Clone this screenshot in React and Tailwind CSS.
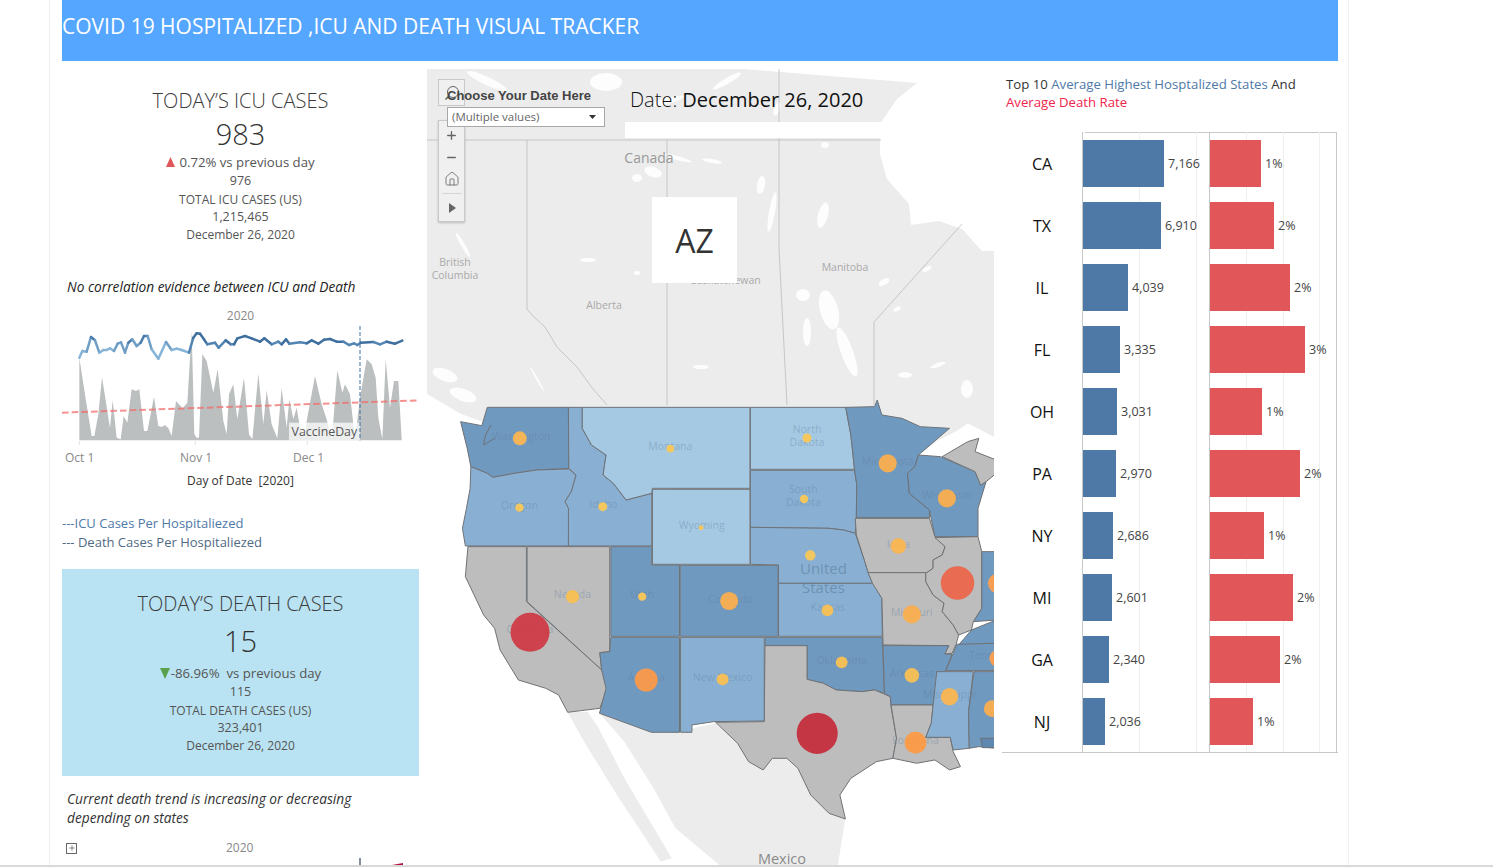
import { Plus, Minus, Home } from 'lucide-react';

const DARK = '#7099c0';
const MID = '#89b0d3';
const LIGHT = '#a5c9e3';
const GRAY = '#bdbdbd';
const LAND = '#ececec';

// state outlines, traced from a crop: x is 2.737x and y is 3x the page
const states = [
  [DARK, '165,37 387,37 388,220 300,225 240,235 180,247 165,235 120,215 110,160 92,80 150,92'],
  [MID, '120,215 165,235 180,247 240,235 300,225 388,222 408,240 395,290 378,320 388,340 387,453 105,453 97,400 108,340 118,280'],
  [MID, '387,37 425,37 425,100 450,150 490,180 482,240 510,265 545,315 580,305 615,295 615,453 387,453 387,340 378,320 395,290 408,240 388,220'],
  [LIGHT, '425,37 884,37 884,280 617,280 615,295 580,305 545,315 510,265 482,240 490,180 450,150 425,100'],
  [LIGHT, '885,37 1146,37 1160,120 1170,223 885,223'],
  [MID, '885,226 1170,226 1176,268 1175,368 1172,415 1140,405 1100,400 885,397'],
  [DARK, '1146,37 1225,35 1232,15 1245,60 1300,70 1350,95 1430,100 1345,180 1335,215 1315,235 1320,295 1375,345 1375,368 1175,368 1176,268 1170,223 1160,120'],
  [DARK, '1345,180 1405,185 1500,230 1515,270 1530,260 1508,340 1508,425 1390,425 1375,345 1320,295 1315,235 1335,215'],
  [GRAY, '1410,185 1480,140 1510,130 1500,170 1558,195 1558,235 1530,260 1515,270 1500,230'],
  [GRAY, '1172,370 1375,370 1390,425 1418,455 1410,480 1385,495 1385,520 1365,535 1207,533 1195,490 1175,420'],
  [MID, '885,397 1100,400 1140,405 1172,415 1195,490 1207,533 1220,565 962,565 962,510 885,508'],
  [MID, '962,565 1220,565 1245,610 1246,724 962,724'],
  [GRAY, '1207,533 1365,533 1365,560 1385,600 1415,625 1410,650 1440,690 1455,720 1448,748 1437,775 1417,777 1428,752 1248,750 1245,610 1220,567'],
  [DARK, '1518,470 1558,470 1558,675 1495,680 1518,640'],
  [DARK, '1455,750 1490,705 1558,675 1558,745'],
  [GRAY, '1390,428 1508,425 1518,470 1518,640 1495,680 1490,705 1455,720 1440,690 1410,650 1415,625 1385,600 1365,560 1365,535 1385,520 1385,495 1410,480 1418,455'],
  [DARK, '925,727 1246,727 1252,895 1225,885 1190,890 1120,885 1085,865 1040,853 1040,752 925,752'],
  [GRAY, '925,752 1040,752 1040,853 1085,865 1120,885 1190,890 1225,885 1268,905 1270,935 1285,1030 1275,1090 1230,1100 1160,1150 1130,1200 1145,1272 1100,1255 1050,1200 1015,1120 985,1090 945,1090 920,1125 880,1100 850,1045 790,982 923,980'],
  [DARK, '1248,752 1428,752 1417,777 1437,778 1420,825 1395,860 1385,930 1270,930 1268,905 1252,895'],
  [GRAY, '1270,930 1385,930 1380,985 1365,1027 1432,1027 1440,1070 1460,1115 1430,1125 1390,1095 1340,1105 1275,1090 1285,1030'],
  [MID, '1395,830 1495,830 1482,950 1484,1060 1440,1065 1432,1027 1365,1027 1380,985 1385,930'],
  [DARK, '1497,830 1558,830 1558,1060 1510,1055 1484,1060 1482,950'],
  ['#5e88b0', '1515,1030 1558,1030 1558,1058 1520,1058'],
  [DARK, '1420,827 1440,775 1450,748 1558,745 1558,827'],
  [GRAY, '274,455 500,455 500,770 473,773 478,825 274,620'],
  [GRAY, '112,455 272,455 272,620 478,825 497,870 473,940 385,952 360,900 325,880 250,855 200,765 185,700 155,660 105,545'],
  [DARK, '503,455 615,455 615,510 691,510 691,724 503,724'],
  [DARK, '693,511 961,511 961,724 693,724'],
  [LIGHT, '617,283 884,283 884,508 617,508'],
  [DARK, '503,727 691,727 691,1012 614,1012 472,955 490,880 478,825 473,773 500,770'],
  [MID, '694,727 923,727 923,978 785,980 725,990 725,1012 694,1012'],
];

const stateLabels = [
  ['Washington', 258, 122], ['Montana', 666, 152], ['North', 1040, 102], ['Dakota', 1040, 140],
  ['Minnesota', 1261, 197], ['Wisconsin', 1423, 301], ['South', 1030, 283], ['Dakota', 1030, 320],
  ['Oregon', 253, 331], ['Idaho', 483, 327], ['Wyoming', 752, 389], ['Iowa', 1290, 446],
  ['Nevada', 398, 597], ['Utah', 589, 597], ['Colorado', 830, 611], ['Kansas', 1097, 637],
  ['Missouri', 1327, 650], ['Oklahoma', 1135, 794], ['Arkansas', 1327, 833],
  ['Arizona', 600, 846], ['New Mexico', 809, 845], ['Mississippi', 1430, 896],
  ['Louisiana', 1337, 1035], ['California', 282, 703],
];

const bubbles = [
  [254, 130, 20, '#f9b652'], [666, 161, 11, '#f8c85a'], [1040, 129, 13, '#f8c85a'], [1261, 205, 26, '#f9ae50'],
  [1423, 310, 26, '#f9ae50'], [1032, 312, 12, '#f8c85a'], [253, 338, 12, '#f8c85a'], [481, 335, 13, '#f8c85a'],
  [750, 398, 7, '#f8c85a'], [1049, 481, 15, '#f8c85a'], [1290, 453, 22, '#f9b652'], [1452, 564, 48, '#e9674d'],
  [1562, 565, 28, '#fa9f50'], [398, 605, 19, '#f8c054'], [589, 605, 12, '#f8c85a'], [827, 618, 26, '#f9ae50'],
  [1096, 646, 17, '#f8c054'], [1327, 658, 26, '#f9ae50'], [282, 712, 56, '#cd3c47'], [1327, 841, 21, '#f8c054'],
  [1135, 802, 17, '#f8c054'], [600, 855, 33, '#fa9a4b'], [809, 853, 17, '#f8c054'], [1430, 905, 25, '#f9b652'],
  [1068, 1015, 59, '#c53040'], [1337, 1043, 31, '#fb9b47'], [1562, 790, 24, '#fa9f50'], [1547, 941, 24, '#f9ae50'],
];

// white lakes over canada, as cx, cy, rx, ry, rotation in map pixels
const lakes = [
  [226, 103, 9, 5, 20], [210, 109, 5, 4, 0], [334, 116, 4, 9, 10], [345, 143, 3, 20, 10], [396, 146, 5, 13, 15],
  [402, 241, 9, 20, -15], [420, 283, 6, 26, -20], [380, 263, 4, 14, 0], [376, 226, 7, 6, 0], [274, 298, 8, 2, 0],
  [161, 191, 8, 2, 0], [210, 204, 3, 2, 0], [179, 13, 16, 9, 0], [240, 32, 18, 3, -15], [250, 89, 15, 2, 15],
  [285, 92, 10, 2, 10], [540, 320, 6, 9, 0], [478, 306, 7, 3, 0], [457, 213, 6, 3, -30], [511, 296, 8, 2, -20],
  [36, 176, 2, 14, -30], [18, 306, 13, 6, 20], [36, 326, 14, 6, 20], [398, 76, 4, 3, 0], [60, 12, 22, 4, 25],
  [110, 310, 1, 14, -30], [300, 12, 16, 3, -30], [350, 40, 3, 7, 20], [470, 240, 4, 2, -30], [500, 200, 5, 2, -30],
];

const mapX = (z) => z / 2.737;
const mapY = (z) => 326 + z / 3;

const icuLine = [
  [88, 170], [97, 150], [110, 152], [123, 108], [135, 118], [148, 155], [160, 147], [170, 147], [180, 142], [192, 150], [203, 128], [213, 124],
  [225, 155], [235, 125], [247, 115], [260, 135], [272, 125], [282, 105], [293, 105], [305, 145], [325, 173], [348, 123], [365, 147], [380, 143],
  [395, 147], [417, 155], [430, 110], [440, 97], [450, 98], [462, 115], [472, 130], [495, 125], [506, 140], [527, 118], [542, 130], [552, 130],
  [562, 112], [585, 105], [605, 112], [630, 122], [643, 112], [665, 130], [685, 122], [695, 130], [708, 115], [718, 128], [750, 124], [770, 127],
  [785, 118], [805, 128], [822, 116], [840, 114], [860, 122], [880, 122], [897, 132], [912, 127], [922, 132], [932, 125], [970, 123], [990, 130],
  [1010, 122], [1035, 128], [1057, 119],
];

const deathArea = '88,418 88,170 108,300 125,405 133,405 145,340 156,228 175,350 180,380 188,298 200,410 212,415 221,345 232,365 245,265 258,270 268,265 282,390 292,390 312,288 325,375 335,378 345,372 355,382 365,405 378,300 398,322 412,305 425,90 433,400 440,410 447,410 457,160 470,180 490,275 503,205 520,360 530,400 537,280 550,250 562,355 582,230 597,400 607,415 625,218 640,370 650,268 665,370 682,412 695,262 710,380 718,295 730,355 740,320 750,380 765,410 770,360 795,225 815,310 830,355 845,415 850,360 862,208 877,275 885,250 900,280 915,415 930,290 950,175 965,190 977,230 985,350 997,415 1007,175 1020,320 1032,240 1045,240 1055,415 1055,418';

const lineColor = (x, y) => {
  if (y > 160) return '#a9cfe8';
  if (x < 430) return y > 140 ? '#86b4d8' : y > 120 ? '#6f9ec6' : '#4a7cac';
  return y > 125 ? '#5285b3' : '#3f6f9f';
};

const topStates = [
  { st: 'CA', hosp: '7,166', hw: 81, rate: '1%', rw: 51 },
  { st: 'TX', hosp: '6,910', hw: 78, rate: '2%', rw: 64 },
  { st: 'IL', hosp: '4,039', hw: 45, rate: '2%', rw: 80 },
  { st: 'FL', hosp: '3,335', hw: 37, rate: '3%', rw: 95 },
  { st: 'OH', hosp: '3,031', hw: 34, rate: '1%', rw: 52 },
  { st: 'PA', hosp: '2,970', hw: 33, rate: '2%', rw: 90 },
  { st: 'NY', hosp: '2,686', hw: 30, rate: '1%', rw: 54 },
  { st: 'MI', hosp: '2,601', hw: 29, rate: '2%', rw: 83 },
  { st: 'GA', hosp: '2,340', hw: 26, rate: '2%', rw: 70 },
  { st: 'NJ', hosp: '2,036', hw: 22, rate: '1%', rw: 43 },
];

function KpiLines({ title, value, valueClass, change, prev, totalLabel, total }) {
  return (
    <div className="flex flex-col items-center text-[12.5px] leading-[18px] text-[#555]">
      <div className="text-[20px] leading-[24px] font-light text-[#3c3c3c]">{title}</div>
      <div className={valueClass}>{value}</div>
      {change}
      <div className="mt-[1px]">{prev}</div>
      <div className="mt-[1px] text-[12px] leading-[17px]">{totalLabel}</div>
      <div>{total}</div>
      <div className="text-[12px]">December 26, 2020</div>
    </div>
  );
}

function TrendChart() {
  return (
    <svg className="block w-[357px] h-[120px]" viewBox="36 75 1071 360">
      <polygon points={deathArea} fill="#bcbfbf" />
      <path d="M88,420 V432 M436,420 V432 M772,420 V432" stroke="#e3e3e3" strokeWidth="3" />
      {icuLine.slice(1).map(([x, y], i) => {
        const [px, py] = icuLine[i];
        return <line key={i} x1={px} y1={py} x2={x} y2={y} stroke={lineColor(x, (y + py) / 2)} strokeWidth="7.5" strokeLinecap="round" />;
      })}
      <line x1="36" y1="335" x2="1107" y2="298" stroke="#f26d6d" strokeOpacity="0.75" strokeWidth="6" strokeDasharray="20 9" />
      <rect x="717" y="365" width="213" height="53" fill="#ffffff" fillOpacity="0.72" />
      <line x1="930" y1="75" x2="930" y2="418" stroke="#3f6f9f" strokeWidth="3" strokeDasharray="12 6" />
      <text x="823" y="405" textAnchor="middle" fontSize="37" fill="#555">VaccineDay</text>
    </svg>
  );
}

function UsMap() {
  return (
    <svg className="absolute inset-0 w-[567px] h-[796px]" viewBox="0 0 567 796">
      <rect width="567" height="796" fill="#ffffff" />
      {/* canada and the us behind the states */}
      <polygon points="0,0 567,0 567,500 470,500 34,345 0,325" fill={LAND} />
      {/* hudson bay */}
      <polygon points="316,0 567,0 567,182 555,182 535,160 512,152 484,156 482,135 460,110 453,85 453,55 470,30 490,14" fill="#ffffff" />
      <g transform="translate(0,326) scale(0.3654,0.3333)">
        {/* baja and mainland mexico */}
        <polygon points="385,952 440,950 470,1000 540,1150 670,1390 640,1400 520,1200 430,1040" fill={LAND} />
        <polygon points="472,955 614,1012 694,1012 725,1000 790,985 850,1045 880,1100 920,1125 945,1090 985,1090 1015,1120 1050,1200 1100,1255 1145,1272 1125,1410 800,1410 680,1300 620,1180 540,1040 500,990" fill={LAND} />
        {/* gulf and the great lakes */}
        <polygon points="1230,900 1558,900 1558,1410 1125,1410 1145,1272 1300,1090" fill="#ffffff" />
        <polygon points="1345,180 1400,135 1450,108 1480,85 1558,130 1558,195 1500,170 1510,130 1480,140 1410,185" fill="#ffffff" />
        <polygon points="1508,340 1530,260 1558,235 1558,470 1520,470 1508,425" fill="#ffffff" />
      </g>
      {lakes.map(([cx, cy, rx, ry, rot]) => (
        <ellipse key={cx + '-' + cy} cx={cx} cy={cy} rx={rx} ry={ry} transform={`rotate(${rot} ${cx} ${cy})`} fill="#ffffff" fillOpacity="0.9" />
      ))}
      {/* province lines */}
      <path d="M0,71 H454 M100,71 V240 L106,247 L118,258 L130,278 L150,298 L166,320 L180,336 M240,71 V336 M352,0 V180 L360,336 M447,336 V253 L535,155" fill="none" stroke="#bdbdbd" strokeWidth="0.8" />
      <g transform="translate(0,326) scale(0.3654,0.3333)">
        {states.map(([fill, pts]) => (
          <polygon key={pts} points={pts} fill={fill} stroke="#6f7276" strokeWidth="1" vectorEffect="non-scaling-stroke" strokeLinejoin="round" />
        ))}
        <path d="M175,90 L160,120 L155,150 L185,130" fill="none" stroke="#6f7276" strokeWidth="1" vectorEffect="non-scaling-stroke" />
      </g>
      {stateLabels.map(([label, x, y]) => (
        <text key={label + y} x={mapX(x)} y={mapY(y) + 4} textAnchor="middle" fontSize="10.5" fill="#5b7c9b" fillOpacity="0.38">{label}</text>
      ))}
      <text x={mapX(1590)} y={mapY(556) + 4} textAnchor="middle" fontSize="10.5" fill="#5b7c9b" fillOpacity="0.38">Indiana</text>
      <text x={mapX(1555)} y={mapY(781) + 4} textAnchor="middle" fontSize="10.5" fill="#5b7c9b" fillOpacity="0.38">Tennessee</text>
      <text x={mapX(1085)} y={mapY(520) + 6} textAnchor="middle" fontSize="15" fill="#5b7c9b" fillOpacity="0.6">United</text>
      <text x={mapX(1085)} y={mapY(575) + 6} textAnchor="middle" fontSize="15" fill="#5b7c9b" fillOpacity="0.6">States</text>
      {bubbles.map(([x, y, r, fill]) => (
        <circle key={x + '-' + y} cx={mapX(x)} cy={mapY(y)} r={r / 2.87} fill={fill} fillOpacity="0.96" />
      ))}
      <text x="222" y="94" textAnchor="middle" fontSize="14" fill="#999">Canada</text>
      <text x="28" y="197" textAnchor="middle" fontSize="10.5" fill="#aaa">British</text>
      <text x="28" y="210" textAnchor="middle" fontSize="10.5" fill="#aaa">Columbia</text>
      <text x="177" y="240" textAnchor="middle" fontSize="10.5" fill="#aaa">Alberta</text>
      <text x="299" y="215" textAnchor="middle" fontSize="10.5" fill="#aaa">Saskatchewan</text>
      <text x="418" y="202" textAnchor="middle" fontSize="10.5" fill="#aaa">Manitoba</text>
      <text x="355" y="795" textAnchor="middle" fontSize="14.5" fill="#8a8a8a">Mexico</text>
    </svg>
  );
}

export default function App() {
  return (
    <div className="h-[868px] w-full overflow-hidden bg-white font-['Open_Sans',sans-serif]">
      <div className="h-[867px] border-b-2 border-[#d9d9d9]">
        <div className="ml-[49px] flex h-full w-[1300px] flex-col overflow-hidden border-x border-[#f0f0f0] pl-[12px]">
          <div className="flex h-[61px] w-[1276px] shrink-0 items-start bg-[#55a6ff] pt-[11px] text-[21px] leading-[30px] font-medium text-white">
            COVID 19 HOSPITALIZED ,ICU AND DEATH VISUAL TRACKER
          </div>

          <div className="mt-[8px] flex min-h-0 flex-1">
            {/* left column */}
            <div className="w-[357px] shrink-0">
              <div className="pt-[20px]">
                <KpiLines
                  title="TODAY’S ICU CASES"
                  value="983"
                  valueClass="mt-[3px] mb-[1px] text-[29px] leading-[36px] font-light text-[#333]"
                  change={
                    <div className="flex items-center gap-[4px] text-[13.2px]">
                      <svg width="9" height="10" viewBox="0 0 9 10"><polygon points="4.5,0 9,10 0,10" fill="#e15759" /></svg>
                      <span>0.72% vs previous day</span>
                    </div>
                  }
                  prev="976"
                  totalLabel="TOTAL ICU CASES (US)"
                  total="1,215,465"
                />
              </div>
              <div className="mt-[34px] pl-[5px] text-[13.7px] leading-[18px] text-[#222] italic">No correlation evidence between ICU and Death</div>
              <div className="mt-[11px] text-center text-[12px] leading-[18px] text-[#888]">2020</div>
              <div className="mt-[1px]">
                <TrendChart />
              </div>
              <div className="mt-[3px] flex pl-[3px] text-[12px] leading-[18px] text-[#888]">
                <span className="w-[115px]">Oct 1</span>
                <span className="w-[113px]">Nov 1</span>
                <span>Dec 1</span>
              </div>
              <div className="mt-[5px] text-center text-[12px] leading-[18px] font-medium text-[#333]">Day of Date&nbsp; [2020]</div>
              <div className="mt-[24px] text-[13px] leading-[19px] text-[#4e79a7]">
                <div>---ICU Cases Per Hospitaliezed</div>
                <div className="text-[#4f6a85]">--- Death Cases Per Hospitaliezed</div>
              </div>
              <div className="mt-[17px] h-[207px] bg-[#b9e3f2] pt-[23px]">
                <KpiLines
                  title="TODAY’S DEATH CASES"
                  value="15"
                  valueClass="mt-[7px] mb-[5px] text-[29px] leading-[36px] font-light text-[#333]"
                  change={
                    <div className="flex items-center gap-[1px] text-[13.2px]">
                      <svg width="10" height="11" viewBox="0 0 10 11"><polygon points="0,0 10,0 5,11" fill="#59a14f" /></svg>
                      <span>-86.96%&nbsp; vs previous day</span>
                    </div>
                  }
                  prev="115"
                  totalLabel="TOTAL DEATH CASES (US)"
                  total="323,401"
                />
              </div>
              <div className="mt-[13px] pl-[5px] text-[13.7px] leading-[19px] text-[#333] italic">
                Current death trend is increasing or decreasing
                <br />
                depending on states
              </div>
              <div className="mt-[12px] flex items-center">
                <span className="ml-[4px] flex h-[11px] w-[11px] items-center justify-center border border-[#666]">
                  <Plus size={8} strokeWidth={2} color="#555" />
                </span>
                <span className="ml-[149px] text-[12px] leading-[18px] text-[#888]">2020</span>
              </div>
              {/* top of the second chart, cut off by the page fold */}
              <svg className="block h-[10px] w-[357px]" viewBox="0 0 357 10">
                <line x1="298" y1="1" x2="298" y2="10" stroke="#5c6b7a" strokeWidth="1.5" />
                <polygon points="324,10 330,8 341,6 341,10" fill="#b3123c" />
                <rect x="320" y="8" width="4" height="2" fill="#a9cfe8" />
              </svg>
            </div>

            {/* map */}
            <div className="relative ml-[8px] h-[796px] w-[567px] shrink-0 border-r border-[#eeeeee]">
              <UsMap />
              <div className="absolute top-[53px] left-[198px] h-[16px] w-[370px] bg-white" />
              <div className="absolute top-[128px] left-[225px] flex h-[86px] w-[85px] items-center justify-center bg-white pt-[2px] text-[32px] text-[#333]">AZ</div>
              <div className="absolute top-[10px] left-[11px] flex h-[27px] w-[27px] items-center justify-center border border-[#c8c8c8] bg-[#f0f0f0]">
                <svg width="16" height="16" viewBox="0 0 16 16" fill="none" stroke="#666" strokeWidth="1">
                  <circle cx="9" cy="7" r="5.5" />
                  <line x1="5" y1="11" x2="1.5" y2="14.5" strokeWidth="1.6" />
                </svg>
              </div>
              <div className="absolute top-[51px] left-[11px] flex h-[102px] w-[27px] flex-col items-center border border-[#c8c8c8] bg-[#f0f0f0] pt-[7px] shadow-[0_1px_2px_#bbb]">
                <Plus size={13} strokeWidth={2.5} color="#666" className="mt-[1px]" />
                <Minus size={13} strokeWidth={2.5} color="#666" className="mt-[9px]" />
                <Home size={16} strokeWidth={1.1} color="#555" className="mt-[7px]" />
                <div className="mt-[6px] h-px w-[20px] bg-[#d5d5d5]" />
                <svg className="mt-[9px]" width="8" height="10" viewBox="0 0 8 10"><polygon points="1,0 8,5 1,10" fill="#666" /></svg>
              </div>
              <div className="absolute top-[18px] left-[20px] font-['Liberation_Sans',sans-serif] text-[13px] leading-[18px] font-bold text-[#444]">Choose Your Date Here</div>
              <div className="absolute top-[38px] left-[20px] flex h-[20px] w-[158px] items-center justify-between border border-[#a8a8a8] bg-white pr-[8px] pl-[4px] text-[11.5px] text-[#666]">
                <span>(Multiple values)</span>
                <svg width="7" height="4" viewBox="0 0 7 4"><polygon points="0,0 7,0 3.5,4" fill="#333" /></svg>
              </div>
              <div className="absolute top-[17px] left-[203px] text-[20px] leading-[28px] text-[#111]">
                <span className="font-light">Date: </span>
                <span className="font-medium">December 26, 2020</span>
              </div>
            </div>

            {/* top 10 bars */}
            <div className="ml-[8px] w-[336px] shrink-0">
              <div className="pt-[6px] pl-[4px] text-[13.2px] leading-[18px] text-[#333]">
                Top 10 <span className="text-[#4e79a7]">Average Highest Hosptalized States</span> And
                <br />
                <span className="text-[#f0244c]">Average Death Rate</span>
              </div>
              <div className="relative mt-[21px] h-[621px] border-b border-[#c8c8c8]">
                <div className="absolute top-0 left-[83px] h-px w-[252px] bg-[#c8c8c8]" />
                <div className="absolute top-0 right-[1px] h-full w-px bg-[#c8c8c8]" />
                <div className="absolute top-0 left-[80px] h-full w-px bg-[#c8c8c8]" />
                <div className="absolute top-0 left-[207px] h-full w-px bg-[#c8c8c8]" />
                <div className="absolute top-0 left-[137px] h-full w-px bg-[#efefef]" />
                <div className="absolute top-0 left-[194px] h-full w-px bg-[#efefef]" />
                <div className="absolute top-0 left-[244px] h-full w-px bg-[#efefef]" />
                <div className="absolute top-0 left-[281px] h-full w-px bg-[#efefef]" />
                <div className="absolute top-0 left-[317px] h-full w-px bg-[#efefef]" />
                <div className="relative flex flex-col gap-[15px] pt-[8px]">
                  {topStates.map((row) => (
                    <div key={row.st} className="flex h-[47px] items-center">
                      <div className="w-[80px] text-center text-[16px] text-[#111]">{row.st}</div>
                      <div className="ml-[1px] flex h-full w-[127px] items-center">
                        <div className="h-full bg-[#4e79a7]" style={{ width: row.hw }} />
                        <span className="mt-[2px] ml-[4px] text-[12.5px] text-[#444]">{row.hosp}</span>
                      </div>
                      <div className="flex h-full items-center">
                        <div className="h-full bg-[#e15759]" style={{ width: row.rw }} />
                        <span className="mt-[2px] ml-[4px] text-[12.5px] text-[#444]">{row.rate}</span>
                      </div>
                    </div>
                  ))}
                </div>
              </div>
            </div>
          </div>
        </div>
      </div>
    </div>
  );
}
